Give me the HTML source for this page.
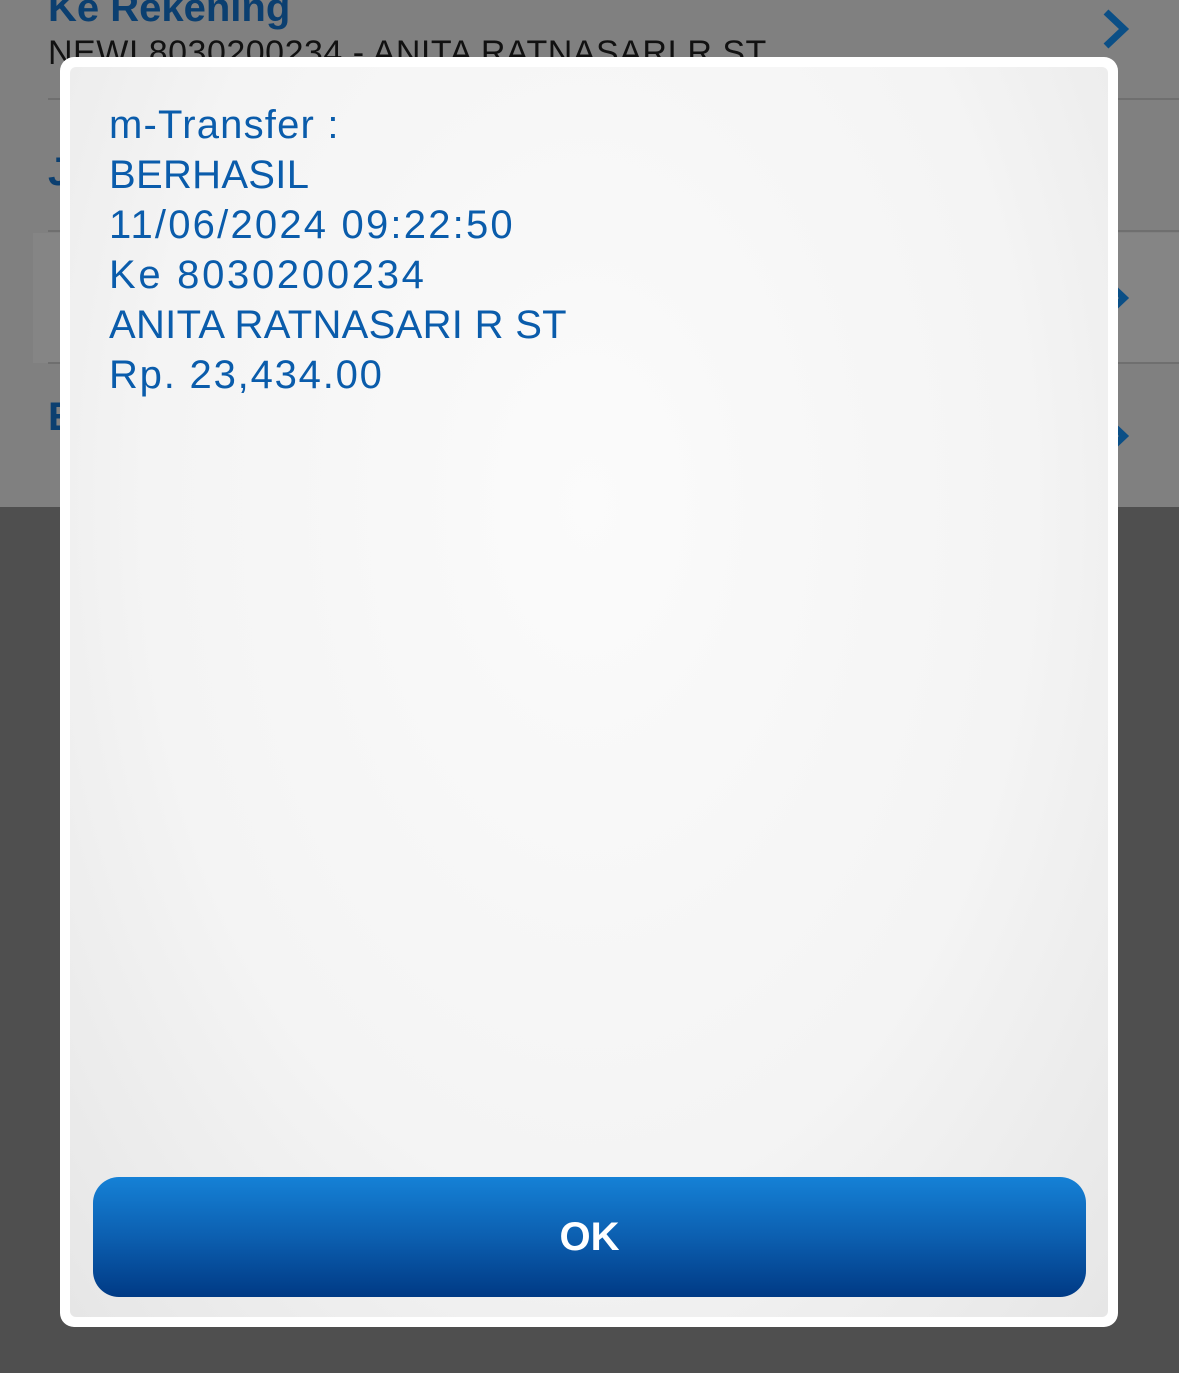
<!DOCTYPE html>
<html><head><meta charset="utf-8"><style>
*{margin:0;padding:0;box-sizing:border-box}
body{width:1179px;height:1373px;background:#4f4f4f;position:relative;overflow:hidden;font-family:"Liberation Sans",sans-serif}
.top{position:absolute;left:0;top:0;width:1179px;height:507px;background:#808080}
.sep{position:absolute;left:48px;right:0;height:2px;background:#6f6f6f}
.t{position:absolute;color:#0b3f70;font-weight:bold}
.chev{position:absolute}
.dlg{position:absolute;left:60px;top:57px;width:1058px;height:1270px;background:#fff;border-radius:14px}
.inner{position:absolute;left:10px;top:10px;width:1038px;height:1250px;border-radius:6px;background:radial-gradient(ellipse at 50% 35%,#fbfbfb 0%,#f4f4f4 60%,#e6e6e6 100%)}
.txt{position:absolute;left:39px;top:33px;color:#0a5cab;font-size:40px;line-height:50px;letter-spacing:0.3px}
.btn{position:absolute;left:23px;top:1110px;width:993px;height:120px;border-radius:26px;background:linear-gradient(#1581d6,#0c5fb0 50%,#003a85);color:#fff;font-size:40px;font-weight:bold;text-align:center;line-height:120px}
</style></head><body>
<div class="top">
<div class="t" style="left:48px;top:-14px;font-size:40px">Ke Rekening</div>
<div style="position:absolute;left:48px;top:34px;font-size:34px;color:#111;letter-spacing:0.5px">NEWI 8030200234 - ANITA RATNASARI R ST</div>
<svg class="chev" style="left:1100px;top:8px" width="32" height="42"><path d="M6 4 L24 21 L6 38" fill="none" stroke="#0b4f86" stroke-width="7"/></svg>
<div class="sep" style="top:98px"></div>
<div class="t" style="left:48px;top:150px;font-size:40px">J</div>
<div class="sep" style="top:230px"></div>
<div style="position:absolute;left:33px;top:233px;width:1146px;height:130px;background:#858585"></div>
<svg class="chev" style="left:1100px;top:277px" width="32" height="42"><path d="M6 4 L24 21 L6 38" fill="none" stroke="#0b4f86" stroke-width="7"/></svg>
<div class="sep" style="top:362px"></div>
<div class="t" style="left:48px;top:395px;font-size:40px">E</div>
<svg class="chev" style="left:1100px;top:415px" width="32" height="42"><path d="M6 4 L24 21 L6 38" fill="none" stroke="#0b4f86" stroke-width="7"/></svg>
</div>
<div class="dlg"><div class="inner">
<div class="txt"><span style="letter-spacing:1.2px">m-Transfer :</span><br>BERHASIL<br><span style="letter-spacing:2.2px">11/06/2024 09:22:50</span><br><span style="letter-spacing:2.7px">Ke 8030200234</span><br>ANITA RATNASARI R ST<br><span style="letter-spacing:1.8px">Rp. 23,434.00</span></div>
<div class="btn">OK</div>
</div></div>
</body></html>
